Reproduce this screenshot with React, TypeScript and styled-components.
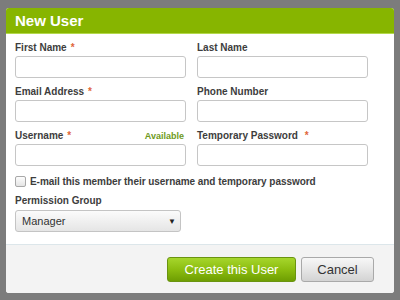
import React from "react";
import styled, { createGlobalStyle } from "styled-components";

const Global = createGlobalStyle`
  html, body { margin: 0; padding: 0; background: #7c7c7c; }
  body { font-family: "Liberation Sans", Arial, sans-serif; }
`;

const Screen = styled.div`
  width: 400px;
  height: 300px;
  padding: 8px 6px 7px 6px;
  box-sizing: border-box;
  background: #7c7c7c;
`;

const Dialog = styled.div`
  height: 100%;
  display: flex;
  flex-direction: column;
  background: #fff;
  border-radius: 3px;
  overflow: hidden;
`;

const Header = styled.div`
  height: 25px;
  background: #87b500;
  border-bottom: 1px solid #b3d84b;
  display: flex;
  align-items: center;
  padding-left: 9px;
  color: #fff;
  font-weight: bold;
  font-size: 15px;
`;

const Body = styled.div`
  padding: 7px 0 0 9px;
  height: 210px;
  box-sizing: border-box;
`;

const Grid = styled.div`
  display: grid;
  grid-template-columns: 171px 171px;
  column-gap: 11px;
  row-gap: 7px;
`;

const Field = styled.div`
  display: flex;
  flex-direction: column;
`;

const LabelRow = styled.div`
  display: flex;
  justify-content: space-between;
  height: 12px;
  line-height: 12px;
  padding-top: 1px;
  margin-bottom: 2px;
`;

const Label = styled.label`
  font-size: 10px;
  font-weight: bold;
  color: #3d3d3d;
`;

const Req = styled.span`
  color: #e0663a;
  margin-left: 4px;
`;

const Available = styled.span`
  font-size: 9px;
  font-weight: bold;
  color: #6e9a1c;
  margin-right: 2px;
`;

const Input = styled.input`
  box-sizing: border-box;
  height: 22px;
  width: 100%;
  border: 1px solid #c6c6c6;
  border-radius: 3px;
  background: #fff;
  margin: 0;
`;

const CheckRow = styled.label`
  display: flex;
  align-items: center;
  height: 14px;
  margin-top: 8px;
  font-size: 10px;
  font-weight: bold;
  color: #3d3d3d;
  letter-spacing: -0.05px;
`;

const Check = styled.span`
  width: 9px;
  height: 9px;
  border: 1px solid #a8a8a8;
  border-radius: 2px;
  background: linear-gradient(#fdfdfd, #e4e4e4);
  margin-right: 4px;
  flex: none;
`;

const GroupLabel = styled(Label)`
  display: block;
  height: 12px;
  line-height: 12px;
  margin-top: 7px;
  margin-bottom: 3px;
`;

const Select = styled.div`
  box-sizing: border-box;
  width: 166px;
  height: 22px;
  border: 1px solid #c4c4c4;
  border-radius: 3px;
  background: linear-gradient(#fbfbfb, #e5e5e5);
  display: flex;
  align-items: center;
  justify-content: space-between;
  padding: 0 4px 0 6px;
  font-size: 11px;
  color: #333;
`;

const Arrow = styled.span`
  font-size: 8px;
  color: #222;
`;

const Footer = styled.div`
  flex: 1;
  background: #f3f3f3;
  border-top: 1px solid #dce6ea;
  display: flex;
  justify-content: flex-end;
  align-items: flex-start;
  padding: 12px 20px 0 0;
  gap: 5px;
`;

const Button = styled.button<{ $primary?: boolean }>`
  box-sizing: border-box;
  height: 25px;
  padding: 0;
  width: ${(p) => (p.$primary ? "129px" : "73px")};
  border-radius: 3px;
  font-family: "Liberation Sans", Arial, sans-serif;
  font-size: 13px;
  border: 1px solid ${(p) => (p.$primary ? "#6a9410" : "#a9a9a9")};
  color: ${(p) => (p.$primary ? "#fff" : "#333")};
  background: ${(p) =>
    p.$primary
      ? "linear-gradient(#a6d62c, #8cbd10 50%, #6e9e02)"
      : "linear-gradient(#f7f7f7, #e6e6e6 50%, #d3d3d3)"};
`;

export default function App() {
  return (
    <>
      <Global />
      <Screen>
        <Dialog>
          <Header>New User</Header>
          <Body>
            <Grid>
              <Field>
                <LabelRow>
                  <Label>
                    First Name<Req>*</Req>
                  </Label>
                </LabelRow>
                <Input />
              </Field>
              <Field>
                <LabelRow>
                  <Label>Last Name</Label>
                </LabelRow>
                <Input />
              </Field>
              <Field>
                <LabelRow>
                  <Label>
                    Email Address<Req>*</Req>
                  </Label>
                </LabelRow>
                <Input />
              </Field>
              <Field>
                <LabelRow>
                  <Label>Phone Number</Label>
                </LabelRow>
                <Input />
              </Field>
              <Field>
                <LabelRow>
                  <Label>
                    Username<Req>*</Req>
                  </Label>
                  <Available>Available</Available>
                </LabelRow>
                <Input />
              </Field>
              <Field>
                <LabelRow>
                  <Label>
                    Temporary Password <Req>*</Req>
                  </Label>
                </LabelRow>
                <Input />
              </Field>
            </Grid>
            <CheckRow>
              <Check />
              E-mail this member their username and temporary password
            </CheckRow>
            <GroupLabel>Permission Group</GroupLabel>
            <Select>
              <span>Manager</span>
              <Arrow>▼</Arrow>
            </Select>
          </Body>
          <Footer>
            <Button $primary>Create this User</Button>
            <Button>Cancel</Button>
          </Footer>
        </Dialog>
      </Screen>
    </>
  );
}
